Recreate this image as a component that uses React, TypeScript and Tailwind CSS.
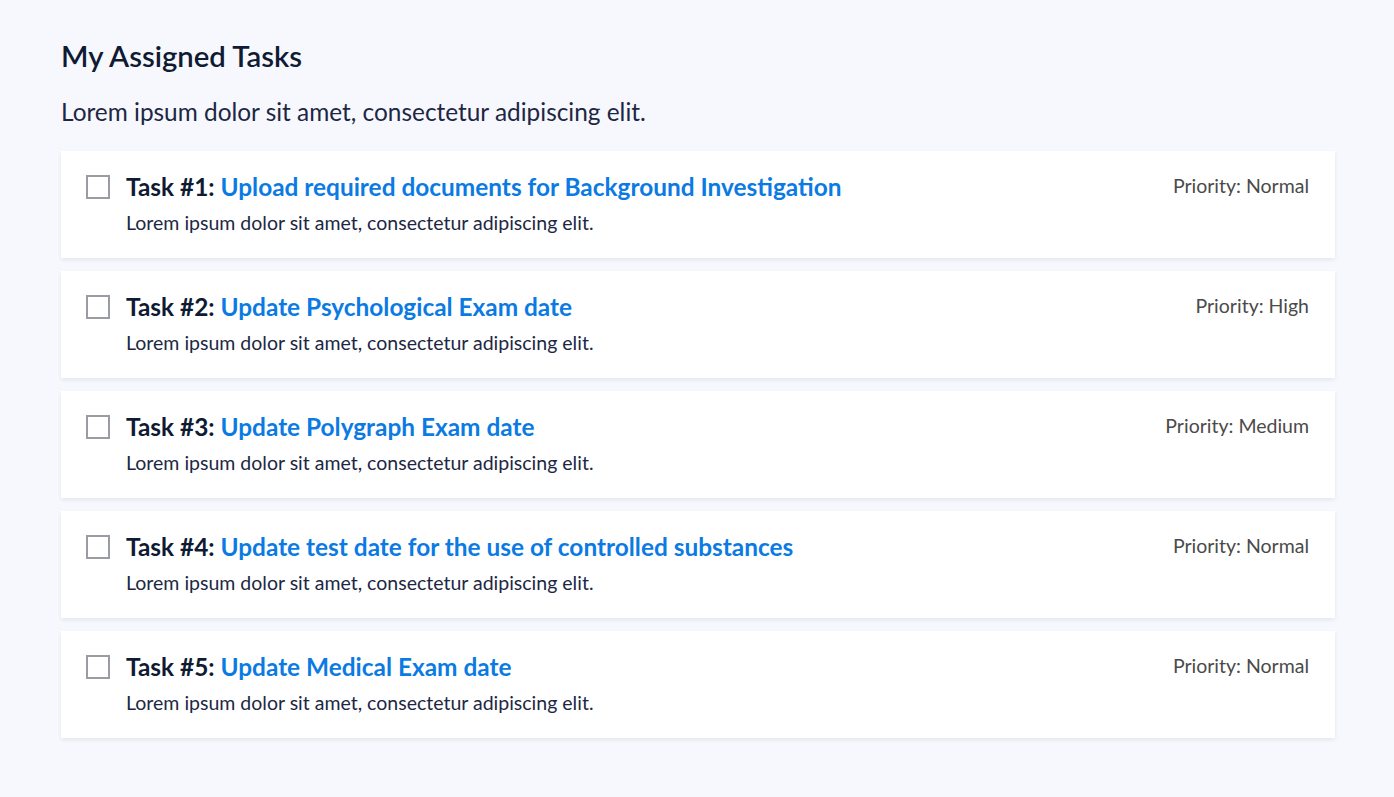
const tasks = [
  { id: 1, title: 'Upload required documents for Background Investigation', priority: 'Normal' },
  { id: 2, title: 'Update Psychological Exam date', priority: 'High' },
  { id: 3, title: 'Update Polygraph Exam date', priority: 'Medium' },
  { id: 4, title: 'Update test date for the use of controlled substances', priority: 'Normal' },
  { id: 5, title: 'Update Medical Exam date', priority: 'Normal' },
];

const lorem = 'Lorem ipsum dolor sit amet, consectetur adipiscing elit.';

function TaskCard({ task }: { task: (typeof tasks)[number] }) {
  return (
    <div className="flex items-start justify-between bg-white h-[107px] pl-[25px] pr-[26px] pt-[21px] shadow-[0_2px_4px_rgba(20,30,60,0.08)]">
      <div className="flex items-start gap-[16px]">
        <span className="mt-[3px] block w-[24px] h-[24px] border-2 border-[#9a9ca3] bg-white shrink-0" />
        <div>
          <h3 className="text-[24.4px] leading-[30px] font-bold text-[#0f1a33]">
            Task #{task.id}: <a className="text-[#0b7be3] cursor-pointer">{task.title}</a>
          </h3>
          <p className="mt-[8px] text-[19.5px] leading-[26px] text-[#1d2744]">{lorem}</p>
        </div>
      </div>
      <span className="text-[19.5px] leading-[24px] text-[#4a4a4a] whitespace-nowrap mt-[2px]">Priority: {task.priority}</span>
    </div>
  );
}

export default function App() {
  return (
    <div className="min-h-screen bg-[#f7f8fd] px-[61px] pt-[38px] pb-10 font-['Lato','Liberation_Sans',sans-serif]">
      <h1 className="text-[29.3px] leading-[36px] font-semibold text-[#0f1a33]">My Assigned Tasks</h1>
      <p className="mt-[23px] text-[24.4px] leading-[30px] text-[#1d2744]">{lorem}</p>
      <div className="mt-[24px] flex flex-col gap-[13px] w-[1274px]">
        {tasks.map((t) => (
          <TaskCard key={t.id} task={t} />
        ))}
      </div>
    </div>
  );
}
